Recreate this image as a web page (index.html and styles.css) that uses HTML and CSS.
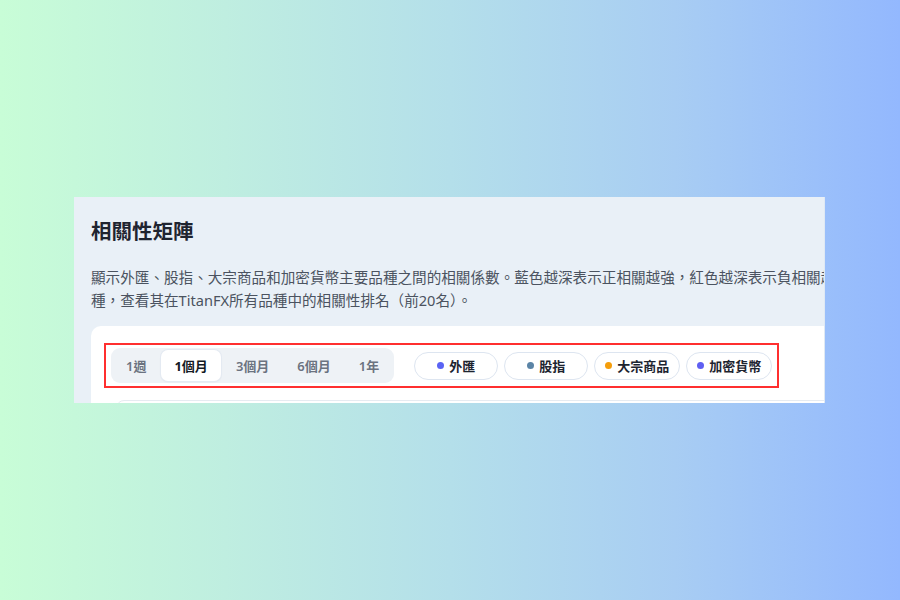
FILE: index.html
```html
<!DOCTYPE html>
<html lang="zh-Hant">
<head>
<meta charset="utf-8">
<title>相關性矩陣</title>
<link rel="stylesheet" href="styles.css">
</head>
<body>
<div class="stage">
  <section class="card">
    <h2 class="title">相關性矩陣</h2>
    <p class="desc">顯示外匯、股指、大宗商品和加密貨幣主要品種之間的相關係數。藍色越深表示正相關越強，紅色越深表示負相關越強。點擊任意品<br>種，查看其在TitanFX所有品種中的相關性排名（前20名）。</p>
    <div class="panel">
      <div class="highlight">
        <div class="toolbar">
          <div class="segmented">
            <button class="tab">1週</button>
            <button class="tab active">1個月</button>
            <button class="tab">3個月</button>
            <button class="tab">6個月</button>
            <button class="tab">1年</button>
          </div>
          <div class="pills">
            <span class="pill"><i class="dot dot-fx"></i>外匯</span>
            <span class="pill"><i class="dot dot-idx"></i>股指</span>
            <span class="pill"><i class="dot dot-cmd"></i>大宗商品</span>
            <span class="pill"><i class="dot dot-crypto"></i>加密貨幣</span>
          </div>
        </div>
      </div>
      <div class="matrix"></div>
    </div>
  </section>
</div>
</body>
</html>
```

FILE: styles.css
```css
html, body {
  margin: 0;
  padding: 0;
}
body {
  width: 900px;
  height: 600px;
  overflow: hidden;
  background: linear-gradient(to right, #c8fdd7 0%, #bfeee0 25%, #b4dfea 50%, #a8cdf3 75%, #93b8fe 100%);
  font-family: "Noto Sans", "Noto Sans CJK TC", sans-serif;
}
.stage {
  padding: 197px 0 0 74px;
}
.card {
  width: 751px;
  height: 206px;
  box-sizing: border-box;
  overflow: hidden;
  background: #e9f0f7;
  border-right: 1px solid #dfe9f4;
  padding: 20px 0 0 17px;
}
.title {
  margin: 0;
  font-size: 20.5px;
  line-height: 28px;
  font-weight: 700;
  color: #1f2430;
}
.desc {
  margin: 21px 0 0;
  font-size: 14.6px;
  line-height: 23px;
  color: #4b5360;
  white-space: nowrap;
}
.panel {
  margin-top: 14px;
  width: 820px;
  height: 140px;
  background: #ffffff;
  border-radius: 10px 0 0 0;
  padding: 17px 0 0 13px;
  box-sizing: border-box;
}
.highlight {
  display: inline-flex;
  border: 2px solid #ff2f2f;
  padding: 3px 5px;
}
.toolbar {
  display: flex;
  align-items: center;
  gap: 20px;
}
.segmented {
  display: flex;
  gap: 2px;
  padding: 2px;
  height: 35px;
  box-sizing: border-box;
  background: #eef2f6;
  border-radius: 9px;
}
.tab {
  font-family: inherit;
  border: 0;
  background: transparent;
  height: 31px;
  padding: 0 13px;
  font-size: 13px;
  font-weight: 600;
  color: #6b7380;
  border-radius: 7px;
}
.tab.active {
  background: #ffffff;
  color: #141a24;
  font-weight: 700;
  box-shadow: 0 0 0 1px #e4eaf2, 0 1px 2px rgba(20, 30, 50, 0.08);
}
.pills {
  display: flex;
  gap: 6px;
}
.pill {
  display: inline-flex;
  align-items: center;
  justify-content: center;
  gap: 5px;
  min-width: 84px;
  height: 28px;
  box-sizing: border-box;
  padding: 0 10px;
  border: 1.5px solid #dde5f0;
  border-radius: 14px;
  background: #ffffff;
  font-size: 13px;
  font-weight: 700;
  color: #1d2430;
}
.dot {
  width: 7px;
  height: 7px;
  border-radius: 50%;
  display: inline-block;
}
.dot-fx { background: #5a63f4; }
.dot-idx { background: #5b84a6; }
.dot-cmd { background: #f59e0b; }
.dot-crypto { background: #5f5ff2; }
.matrix {
  margin: 12px 0 0 12px;
  height: 80px;
  border: 1px solid #e6ebf1;
  border-radius: 8px;
}
```
